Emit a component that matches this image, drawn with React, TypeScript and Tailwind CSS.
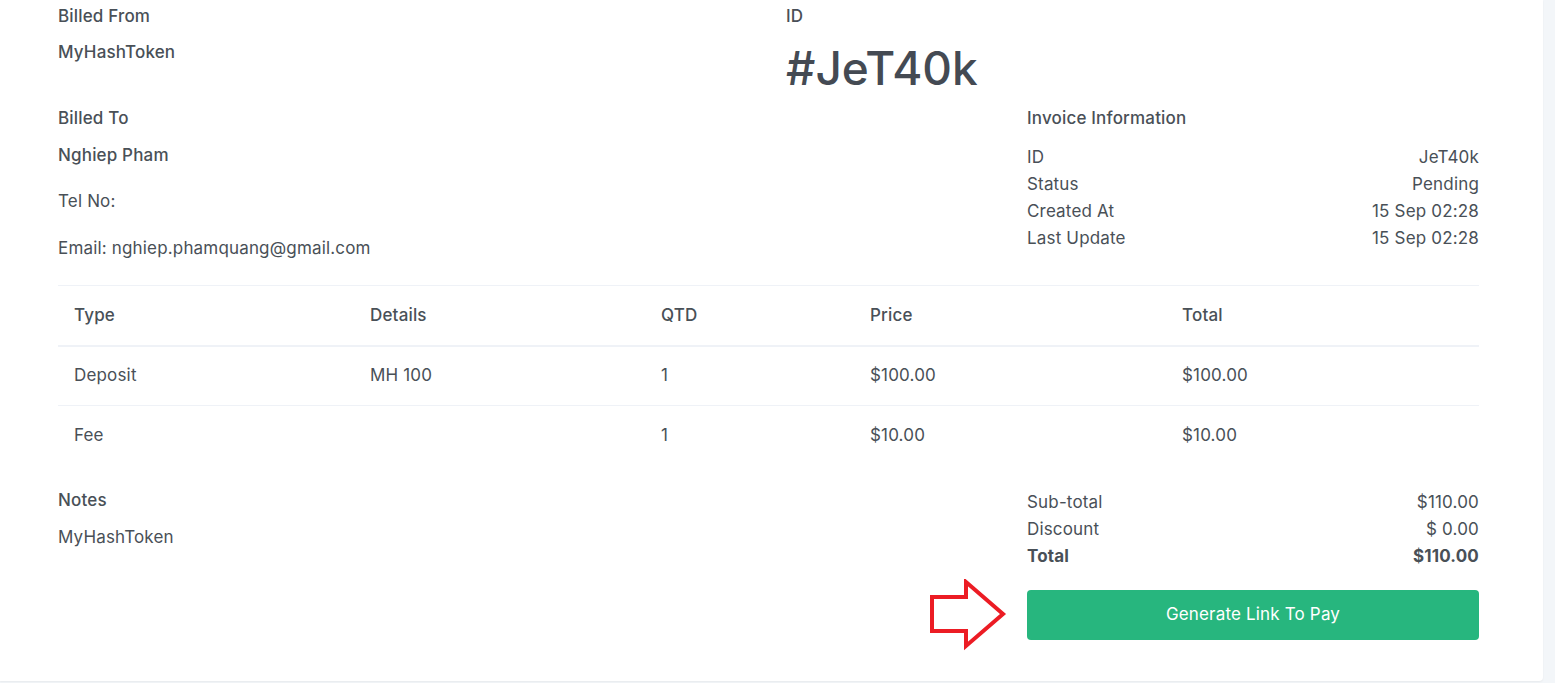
import React from 'react'

const items = [
  { type: 'Deposit', details: 'MH 100', qty: '1', price: '$100.00', total: '$100.00' },
  { type: 'Fee', details: '', qty: '1', price: '$10.00', total: '$10.00' },
]

const info = [
  ['ID', 'JeT40k'],
  ['Status', 'Pending'],
  ['Created At', '15 Sep 02:28'],
  ['Last Update', '15 Sep 02:28'],
]

function Arrow() {
  return (
    <svg width="80" height="72" viewBox="0 0 80 72" className="mr-[19px] mt-[-11px]">
      <path
        d="M4 18 L38 18 L38 3 L75 35 L38 67 L38 52 L4 52 Z"
        fill="none"
        stroke="#ec1c24"
        strokeWidth="4"
        strokeLinejoin="miter"
      />
    </svg>
  )
}

export default function App() {
  return (
    <div className="min-h-[683px] bg-[#f3f6f9] font-['Inter',sans-serif] text-[17px] tracking-[0.01em] text-[#495057]">
      <div className="w-[1543px] h-[681px] bg-white rounded-br-[4px] shadow-[0_1px_2px_rgba(0,0,0,0.05)] pl-[58px] pr-[64px]">
        {/* header */}
        <div className="flex">
          <div className="w-[728px] pt-[5px]">
            <p className="font-medium leading-[22px]">Billed From</p>
            <p className="font-medium leading-[22px] mt-[14px]">MyHashToken</p>
          </div>
          <div className="pt-[5px]">
            <p className="font-medium leading-[22px]">ID</p>
            <h1 className="text-[46px] font-medium leading-[56px] mt-[13px] tracking-normal text-[#444a53]">#JeT40k</h1>
          </div>
        </div>

        {/* billed to + invoice info */}
        <div className="flex mt-[11px]">
          <div className="flex-1">
            <p className="font-medium leading-[22px]">Billed To</p>
            <p className="font-medium leading-[22px] mt-[15px]">Nghiep Pham</p>
            <p className="leading-[22px] mt-[24px]">Tel No:</p>
            <p className="leading-[22px] mt-[25px]">Email: nghiep.phamquang@gmail.com</p>
          </div>
          <div className="w-[452px]">
            <p className="font-medium leading-[22px]">Invoice Information</p>
            <div className="mt-[15px]">
              {info.map(([k, v]) => (
                <div key={k} className="flex justify-between leading-[27px]">
                  <span>{k}</span>
                  <span>{v}</span>
                </div>
              ))}
            </div>
          </div>
        </div>

        {/* items table */}
        <table className="w-full mt-[26px] border-t border-[#eff2f7] text-left">
          <thead>
            <tr className="border-b-2 border-[#eff2f7]">
              <th className="w-[296px] px-4 h-[60px] font-medium">Type</th>
              <th className="w-[291px] px-4 font-medium">Details</th>
              <th className="w-[209px] px-4 font-medium">QTD</th>
              <th className="w-[312px] px-4 font-medium">Price</th>
              <th className="px-4 font-medium">Total</th>
            </tr>
          </thead>
          <tbody>
            {items.map((it, i) => (
              <tr key={it.type} className={i === 0 ? 'border-b border-[#eff2f7]' : ''}>
                <td className="px-4 h-[60px]">{it.type}</td>
                <td className="px-4">{it.details}</td>
                <td className="px-4">{it.qty}</td>
                <td className="px-4">{it.price}</td>
                <td className="px-4">{it.total}</td>
              </tr>
            ))}
          </tbody>
        </table>

        {/* notes + totals */}
        <div className="flex mt-[23px]">
          <div className="flex-1">
            <p className="font-medium leading-[22px]">Notes</p>
            <p className="leading-[22px] mt-[15px]">MyHashToken</p>
          </div>
          <div className="w-[452px]">
            <div className="flex justify-between leading-[27px]">
              <span>Sub-total</span>
              <span>$110.00</span>
            </div>
            <div className="flex justify-between leading-[27px]">
              <span>Discount</span>
              <span>$ 0.00</span>
            </div>
            <div className="flex justify-between leading-[27px] font-bold">
              <span>Total</span>
              <span>$110.00</span>
            </div>
          </div>
        </div>

        <div className="flex justify-end items-start mt-[20px]">
          <Arrow />
          <button className="w-[452px] h-[50px] rounded-[4px] bg-[#27b67e] text-white text-[17px]">
            Generate Link To Pay
          </button>
        </div>
      </div>
    </div>
  )
}
